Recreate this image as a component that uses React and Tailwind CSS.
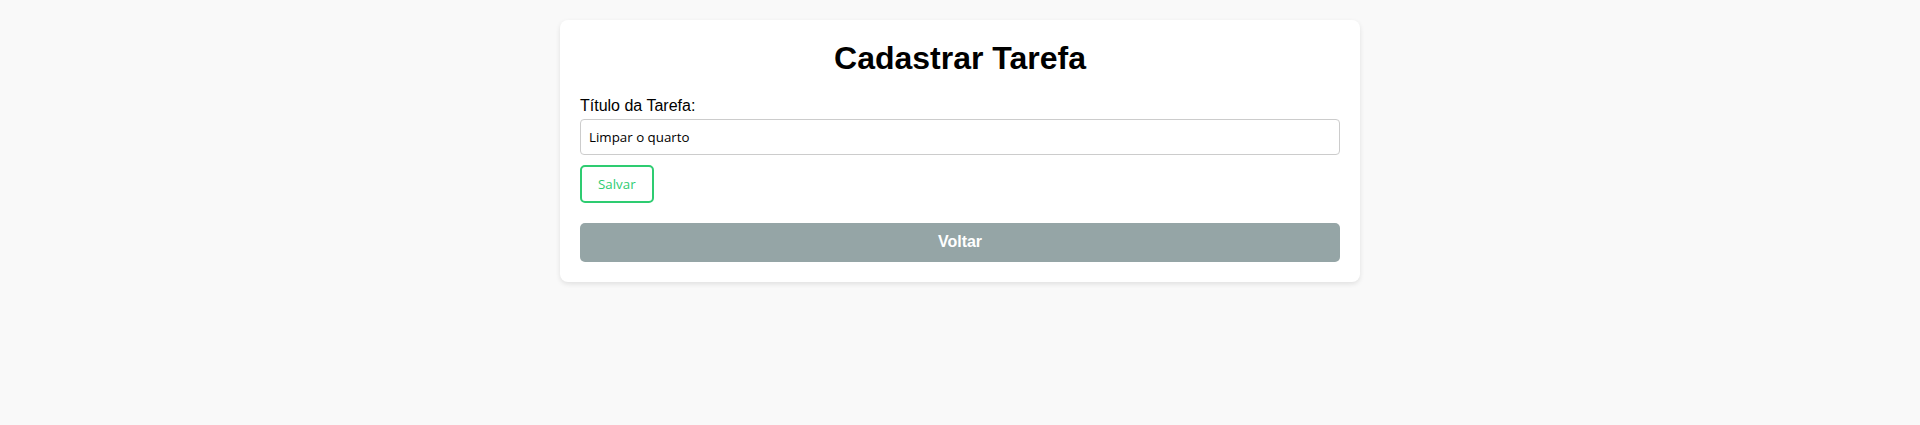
import React, { useState } from "react";

export default function App() {
  const [titulo, setTitulo] = useState("Limpar o quarto");

  return (
    <div className="min-h-screen bg-[#f9f9f9] pt-5 font-['Liberation_Sans',Arial,sans-serif]">
      <div className="mx-auto w-[800px] rounded-lg bg-white p-5 shadow-[0_2px_5px_rgba(0,0,0,0.1)]">
        <h1 className="mb-5 text-center text-[32px] leading-[1.15] font-bold text-black">
          Cadastrar Tarefa
        </h1>

        <form onSubmit={(e) => e.preventDefault()}>
          <label className="mb-1 block text-base leading-[1.15] text-black">
            Título da Tarefa:
          </label>
          <input
            type="text"
            value={titulo}
            onChange={(e) => setTitulo(e.target.value)}
            className="block w-full rounded border border-[#ccc] px-2 py-2 font-['Open_Sans',sans-serif] text-[13.333px] leading-[18px] text-black outline-none"
          />
          <button
            type="submit"
            className="mt-[10px] rounded-[5px] border-2 border-[#2ecc71] bg-white px-4 py-2 font-['Open_Sans',sans-serif] text-[13.333px] leading-[18px] text-[#2ecc71]"
          >
            Salvar
          </button>
        </form>

        {/* Back button */}
        <button className="mt-5 block w-full rounded-[5px] bg-[#95a5a6] py-[10px] text-base leading-[1.15] font-bold text-white">
          Voltar
        </button>
      </div>
    </div>
  );
}
